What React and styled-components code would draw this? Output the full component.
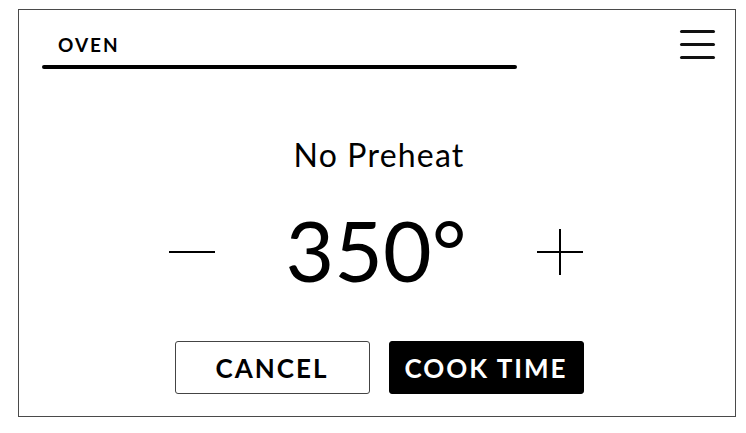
import styled, { createGlobalStyle } from "styled-components";

const GlobalStyle = createGlobalStyle`
  html, body {
    margin: 0;
    padding: 0;
    background: #ffffff;
  }
  body {
    font-family: "Lato", "Noto Sans", sans-serif;
    color: #000;
  }
`;

const Frame = styled.div`
  box-sizing: border-box;
  display: flex;
  flex-direction: column;
  width: 718px;
  height: 408px;
  margin: 9px 0 0 18px;
  border: 1px solid #4a4a4a;
`;

const Header = styled.div`
  display: flex;
  flex-direction: row;
  justify-content: space-between;
  align-items: flex-start;
  padding: 0 20px 0 23px;
`;

const Tab = styled.div`
  display: flex;
  flex-direction: column;
  width: 475px;
  padding-top: 24px;
`;

const TabLabel = styled.div`
  font-size: 19px;
  font-weight: 700;
  letter-spacing: 2px;
  line-height: 22px;
  padding-left: 16px;
`;

const TabLine = styled.div`
  height: 4px;
  margin-top: 9px;
  border-radius: 2px;
  background: #000;
`;

const Menu = styled.button`
  display: flex;
  flex-direction: column;
  justify-content: space-between;
  width: 35px;
  height: 29px;
  margin-top: 20px;
  padding: 0;
  border: none;
  background: none;

  span {
    display: block;
    height: 3px;
    border-radius: 2px;
    background: #111;
  }
`;

const Body = styled.div`
  display: flex;
  flex-direction: column;
  align-items: center;
  padding-left: 4px;
`;

const Mode = styled.div`
  margin-top: 68px;
  font-size: 32px;
  font-weight: 400;
  line-height: 36px;
  letter-spacing: 1.2px;
`;

const TempRow = styled.div`
  display: flex;
  flex-direction: row;
  align-items: center;
  margin-top: 32px;
  margin-right: 6px;
  height: 90px;
`;

const Step = styled.button`
  display: flex;
  align-items: center;
  justify-content: center;
  width: 46px;
  height: 46px;
  margin-top: 4px;
  padding: 0;
  border: none;
  background: none;
  cursor: pointer;
`;

const Temp = styled.div`
  width: 322px;
  text-align: center;
  font-size: 84px;
  font-weight: 400;
  line-height: 90px;
`;

const Actions = styled.div`
  display: flex;
  flex-direction: row;
  gap: 19px;
  margin-top: 46px;
`;

const ActionButton = styled.button`
  box-sizing: border-box;
  width: 195px;
  height: 53px;
  border-radius: 3px;
  border: 1.5px solid ${(p) => (p.$primary ? "#000" : "#444")};
  background: ${(p) => (p.$primary ? "#000" : "#fff")};
  color: ${(p) => (p.$primary ? "#fff" : "#000")};
  font-family: "Lato", sans-serif;
  font-size: 26px;
  font-weight: 700;
  letter-spacing: 2px;
  cursor: pointer;
`;

function App() {
  return (
    <>
      <GlobalStyle />
      <Frame>
        <Header>
          <Tab>
            <TabLabel>OVEN</TabLabel>
            <TabLine />
          </Tab>
          <Menu aria-label="menu">
            <span />
            <span />
            <span />
          </Menu>
        </Header>
        <Body>
          <Mode>No Preheat</Mode>
          <TempRow>
            <Step aria-label="decrease">
              <svg width="46" height="46" viewBox="0 0 46 46">
                <line x1="0" y1="23" x2="46" y2="23" stroke="#000" strokeWidth="2" />
              </svg>
            </Step>
            <Temp>350°</Temp>
            <Step aria-label="increase">
              <svg width="46" height="46" viewBox="0 0 46 46">
                <line x1="0" y1="23" x2="46" y2="23" stroke="#000" strokeWidth="2" />
                <line x1="23" y1="0" x2="23" y2="46" stroke="#000" strokeWidth="2" />
              </svg>
            </Step>
          </TempRow>
          <Actions>
            <ActionButton>CANCEL</ActionButton>
            <ActionButton $primary>COOK TIME</ActionButton>
          </Actions>
        </Body>
      </Frame>
    </>
  );
}

export default App;
